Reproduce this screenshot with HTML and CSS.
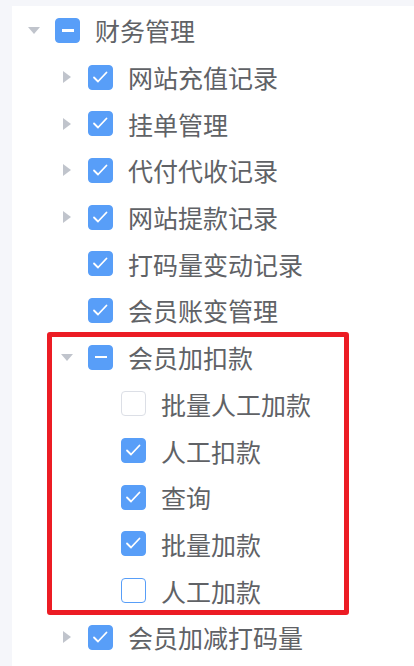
FILE: index.html
```html
<!DOCTYPE html>
<html lang="zh-CN">
<head>
    <meta charset="UTF-8">
    <meta name="viewport" content="width=device-width, initial-scale=1.0">
    <title>权限树</title>
    <link rel="stylesheet" href="styles.css">
</head>
<body>
    <div class="panel">
        <div class="node lv0">
            <span class="caret down"></span>
            <span class="box half"><i></i></span>
            <span class="label">财务管理</span>
        </div>

        <div class="node lv1">
            <span class="caret right"></span>
            <span class="box on"><svg viewBox="0 0 25 25"><polyline points="6,12.5 10,16.5 18.5,7.5"/></svg></span>
            <span class="label">网站充值记录</span>
        </div>
        <div class="node lv1">
            <span class="caret right"></span>
            <span class="box on"><svg viewBox="0 0 25 25"><polyline points="6,12.5 10,16.5 18.5,7.5"/></svg></span>
            <span class="label">挂单管理</span>
        </div>
        <div class="node lv1">
            <span class="caret right"></span>
            <span class="box on"><svg viewBox="0 0 25 25"><polyline points="6,12.5 10,16.5 18.5,7.5"/></svg></span>
            <span class="label">代付代收记录</span>
        </div>
        <div class="node lv1">
            <span class="caret right"></span>
            <span class="box on"><svg viewBox="0 0 25 25"><polyline points="6,12.5 10,16.5 18.5,7.5"/></svg></span>
            <span class="label">网站提款记录</span>
        </div>
        <div class="node lv1">
            <span class="caret"></span>
            <span class="box on"><svg viewBox="0 0 25 25"><polyline points="6,12.5 10,16.5 18.5,7.5"/></svg></span>
            <span class="label">打码量变动记录</span>
        </div>
        <div class="node lv1">
            <span class="caret"></span>
            <span class="box on"><svg viewBox="0 0 25 25"><polyline points="6,12.5 10,16.5 18.5,7.5"/></svg></span>
            <span class="label">会员账变管理</span>
        </div>

        <!-- highlighted group -->
        <div class="group">
            <div class="node lv1">
                <span class="caret down"></span>
                <span class="box half"><i></i></span>
                <span class="label">会员加扣款</span>
            </div>
            <div class="node lv2">
                <span class="caret"></span>
                <span class="box"></span>
                <span class="label">批量人工加款</span>
            </div>
            <div class="node lv2">
                <span class="caret"></span>
                <span class="box on"><svg viewBox="0 0 25 25"><polyline points="6,12.5 10,16.5 18.5,7.5"/></svg></span>
                <span class="label">人工扣款</span>
            </div>
            <div class="node lv2">
                <span class="caret"></span>
                <span class="box on"><svg viewBox="0 0 25 25"><polyline points="6,12.5 10,16.5 18.5,7.5"/></svg></span>
                <span class="label">查询</span>
            </div>
            <div class="node lv2">
                <span class="caret"></span>
                <span class="box on"><svg viewBox="0 0 25 25"><polyline points="6,12.5 10,16.5 18.5,7.5"/></svg></span>
                <span class="label">批量加款</span>
            </div>
            <div class="node lv2">
                <span class="caret"></span>
                <span class="box focus"></span>
                <span class="label">人工加款</span>
            </div>
        </div>

        <div class="node lv1">
            <span class="caret right"></span>
            <span class="box on"><svg viewBox="0 0 25 25"><polyline points="6,12.5 10,16.5 18.5,7.5"/></svg></span>
            <span class="label">会员加减打码量</span>
        </div>
    </div>
</body>
</html>
```

FILE: styles.css
```css
html, body {
    height: 100%;
}

body {
    margin: 0;
    background: #f5f6fa;
    font-family: "Noto Sans CJK SC", "Noto Sans", sans-serif;
    overflow: hidden;
}

.panel {
    position: relative;
    box-sizing: border-box;
    margin: 6px 0 0 12px;
    padding-top: 1px;
    height: calc(100vh - 6px);
    overflow: hidden;
    background: #ffffff;
}

.node {
    display: flex;
    align-items: center;
    height: 46.7px;
}

.lv1 {
    padding-left: 33px;
}

.lv2 {
    padding-left: 66px;
}

.caret {
    width: 43px;
    flex: none;
    display: flex;
    justify-content: center;
    align-items: center;
}

.caret.down::before {
    content: "";
    border-top: 7px solid #c0c4cc;
    border-left: 6px solid transparent;
    border-right: 6px solid transparent;
}

.caret.right::before {
    content: "";
    border-left: 8px solid #c0c4cc;
    border-top: 6.5px solid transparent;
    border-bottom: 6.5px solid transparent;
}

.box {
    box-sizing: border-box;
    width: 25px;
    height: 25px;
    flex: none;
    margin-right: 15px;
    border: 1px solid #dcdfe6;
    border-radius: 4px;
    background: #ffffff;
    display: flex;
    align-items: center;
    justify-content: center;
}

.box.on,
.box.half {
    border-color: #589ef8;
    background: #589ef8;
}

.box.focus {
    border-color: #589ef8;
}

.box svg {
    width: 25px;
    height: 25px;
    margin: -1px;
}

.box polyline {
    fill: none;
    stroke: #ffffff;
    stroke-width: 1.8;
    stroke-linecap: round;
    stroke-linejoin: round;
}

.box.half i {
    width: 12px;
    height: 2.5px;
    background: #ffffff;
}

.label {
    font-size: 25px;
    color: #606266;
    white-space: nowrap;
}

.group {
    position: relative;
}

.group::after {
    content: "";
    position: absolute;
    top: -2px;
    bottom: -1px;
    left: 35px;
    right: 65px;
    border: 5px solid #ec1c24;
    border-radius: 3px;
    pointer-events: none;
}
```
